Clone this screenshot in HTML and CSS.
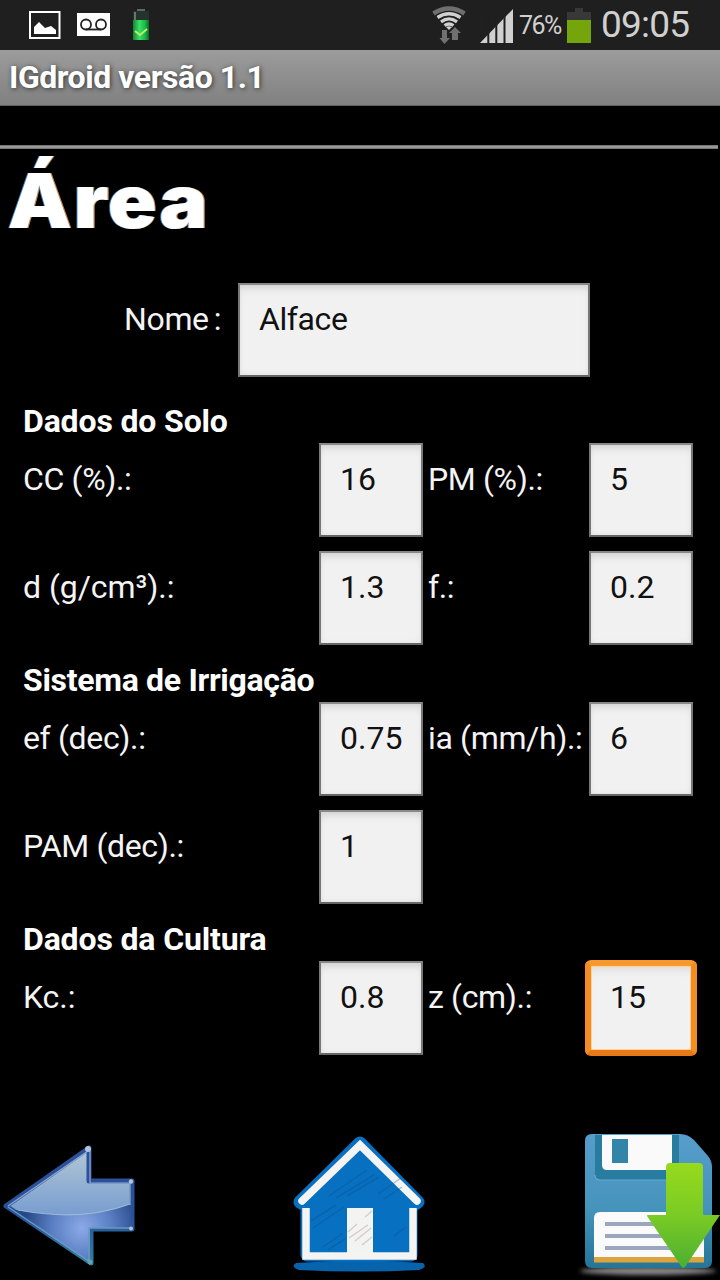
FILE: index.html
```html
<!DOCTYPE html>
<html lang="pt-BR">
<head>
    <meta charset="UTF-8">
    <meta name="viewport" content="width=device-width, initial-scale=1.0">
    <title>IGdroid versão 1.1</title>
    <link rel="stylesheet" href="styles.css">
</head>
<body>
    <!-- Status bar -->
    <div class="statusbar">
        <div class="notifications">
            <svg class="ico-picture" width="32" height="28" viewBox="0 0 32 28">
                <rect x="1" y="1" width="29.5" height="26" fill="none" stroke="#fff" stroke-width="2"/>
                <path d="M5 23V16L10 11L16 17L22 15L27 19V23Z" fill="#fff"/>
            </svg>
            <svg class="ico-voicemail" width="33" height="23" viewBox="0 0 33 23">
                <rect width="33" height="23" fill="#fff"/>
                <g fill="none" stroke="#222" stroke-width="1.8">
                    <circle cx="9" cy="11.5" r="5"/>
                    <circle cx="24" cy="11.5" r="5"/>
                    <path d="M9 16.5H24"/>
                </g>
            </svg>
            <svg class="ico-charge" width="18" height="32" viewBox="0 0 18 32">
                <defs>
                    <linearGradient id="cell" x1="0" x2="1" y1="0" y2="0">
                        <stop offset="0" stop-color="#138535"/>
                        <stop offset=".4" stop-color="#3be065"/>
                        <stop offset=".75" stop-color="#18b948"/>
                        <stop offset="1" stop-color="#0c6728"/>
                    </linearGradient>
                </defs>
                <rect x="5" y="0" width="8" height="3" fill="#5c6964"/>
                <rect x="1" y="2" width="16" height="10" fill="#24342d"/>
                <path d="M3 3V11" stroke="#64766d" stroke-width="2"/>
                <rect x="1" y="11" width="16" height="20" fill="url(#cell)"/>
                <path d="M3 22L8 26L15 20" fill="none" stroke="#b5f16b" stroke-width="2"/>
            </svg>
        </div>
        <div class="system">
            <svg class="ico-wifi" width="34" height="38" viewBox="0 0 34 38">
                <path d="M1.5 7.5Q17 -2.5 32.5 7.5" fill="none" stroke="#6e6e6e" stroke-width="4.5"/>
                <g fill="none" stroke="#d0d0d0" stroke-width="3.3">
                    <path d="M5.5 11.5Q17 4 28.5 11.5"/>
                    <path d="M9 15.8Q17 10 25 15.8"/>
                    <path d="M12.5 19.5Q17 16.5 21.5 19.5"/>
                </g>
                <path d="M14 21Q17 19.5 20 21L17 24Z" fill="#d0d0d0"/>
                <path d="M10 24H15V32H18L12.5 38L7.5 32H10Z" fill="#707070"/>
                <path d="M20 34V27H17L23 21L29 27H26V34Z" fill="#707070"/>
            </svg>
            <svg class="ico-signal" width="33" height="34" viewBox="0 0 33 34">
                <path d="M0 34L33 0V34Z" fill="#d0d0d0"/>
                <path d="M8.3 0V34M16.3 0V34M24.5 0V34" stroke="#1f1f1f" stroke-width="2"/>
            </svg>
            <span class="percent">76%</span>
            <svg class="ico-battery" width="24" height="35" viewBox="0 0 24 35">
                <path d="M0 4H8V0H16V4H24V13H0Z" fill="#383838"/>
                <rect y="12" width="24" height="23" fill="#74a50a"/>
            </svg>
            <span class="clock">09:05</span>
        </div>
    </div>

    <div class="titlebar">IGdroid versão 1.1</div>

    <main class="screen">
        <hr class="rule">
        <h1 class="heading">Área</h1>

        <div class="name-row">
            <span class="label">Nome<span class="colon">:</span></span>
            <div class="field wide">Alface</div>
        </div>

        <h2 class="section">Dados do Solo</h2>
        <div class="fields">
            <span class="label">CC (%).:</span>
            <div class="field">16</div>
            <span class="label">PM (%).:</span>
            <div class="field">5</div>
            <span class="label unit">d (g/cm³).:</span>
            <div class="field">1.3</div>
            <span class="label">f.:</span>
            <div class="field">0.2</div>
        </div>

        <h2 class="section irrigation">Sistema de Irrigação</h2>
        <div class="fields">
            <span class="label">ef (dec).:</span>
            <div class="field">0.75</div>
            <span class="label">ia (mm/h).:</span>
            <div class="field">6</div>
            <span class="label">PAM (dec).:</span>
            <div class="field">1</div>
        </div>

        <h2 class="section">Dados da Cultura</h2>
        <div class="fields">
            <span class="label unit">Kc.:</span>
            <div class="field">0.8</div>
            <span class="label">z (cm).:</span>
            <div class="field focused">15</div>
        </div>
    </main>

    <!-- Bottom buttons -->
    <nav class="actions">
        <svg class="btn-back" width="150" height="150" viewBox="0 0 150 150">
            <defs>
                <linearGradient id="arrowBody" x1="0" x2="0" y1="0" y2="1">
                    <stop offset="0" stop-color="#b4c8d4"/>
                    <stop offset=".55" stop-color="#7b9fd0"/>
                    <stop offset="1" stop-color="#6f9fce"/>
                </linearGradient>
                <radialGradient id="arrowLow" gradientUnits="userSpaceOnUse" cx="82" cy="98" r="58">
                    <stop offset="0" stop-color="#8ba9e6"/>
                    <stop offset=".5" stop-color="#5c80c4"/>
                    <stop offset="1" stop-color="#264889"/>
                </radialGradient>
                <linearGradient id="arrowEdge" x1="0" x2="0" y1="0" y2="1">
                    <stop offset="0" stop-color="#2d509a"/>
                    <stop offset=".6" stop-color="#29519b"/>
                    <stop offset="1" stop-color="#337e9d"/>
                </linearGradient>
                <clipPath id="arrowClip"><path d="M6 76L89 19V52H131V98H90V133Z"/></clipPath>
            </defs>
            <path d="M6 76L89 18V51H132V99H91V133Z" fill="url(#arrowBody)" stroke="url(#arrowEdge)" stroke-width="5" stroke-linejoin="round"/>
            <path d="M0 77Q82 94 132 73V135H0Z" fill="url(#arrowLow)" clip-path="url(#arrowClip)"/>
            <path d="M8 76L88 21M90 20V53H130V75M18 80Q82 92 130 74" fill="none" stroke="#a9c2db" stroke-width="1.2" opacity=".8"/>
            <path d="M8 77L89 131V98H130" fill="none" stroke="#639bc2" stroke-width="1.5"/>
            <g fill="#b3c4dc">
                <circle cx="88" cy="19" r="3"/>
                <circle cx="131" cy="51.5" r="2.2"/>
                <circle cx="131" cy="98.5" r="2"/>
            </g>
            <circle cx="90" cy="132" r="2.5" fill="#61a2b6"/>
        </svg>

        <svg class="btn-home" width="160" height="160" viewBox="0 0 160 160">
            <path d="M16 143Q80 138 143 143Q148 147 139 150Q80 153 19 150Q10 147 16 143Z" fill="#0863ad"/>
            <path d="M20 82L80 23L138 82L131 87V135H27V86Z" fill="#0870c0" stroke="#0870c0" stroke-width="13" stroke-linejoin="round"/>
            <path d="M26 88V136H133V88" fill="none" stroke="#f4f4f2" stroke-width="7.5"/>
            <path d="M22 81L80 25L137 81" fill="none" stroke="#f4f4f2" stroke-width="7.5" stroke-linecap="round"/>
            <g stroke="#064b83" stroke-width="1.5" opacity=".3">
                <path d="M49 76L87 50M56 78L94 55M67 76L99 57M31 101L56 85M33 108L64 87M43 127L63 113M48 130L65 119M98 74L121 58M104 79L122 67M114 116L126 107"/>
            </g>
            <rect x="67" y="88" width="26" height="45" fill="#f3f3f1"/>
            <path d="M68 112L77 104M69 118L88 105M75 121L91 108M82 125L92 117M85 97L92 91" stroke="#d2cecb" stroke-width="1.5"/>
        </svg>

        <svg class="btn-save" width="150" height="160" viewBox="0 0 150 160">
            <defs>
                <linearGradient id="disk" x1="0" x2="0" y1="0" y2="1">
                    <stop offset="0" stop-color="#579dcb"/>
                    <stop offset=".55" stop-color="#4594bc"/>
                    <stop offset="1" stop-color="#247597"/>
                </linearGradient>
                <linearGradient id="down" x1="0" x2="0" y1="0" y2="1">
                    <stop offset="0" stop-color="#96da1d"/>
                    <stop offset=".5" stop-color="#7acb24"/>
                    <stop offset="1" stop-color="#4cae32"/>
                </linearGradient>
                <filter id="soft" x="-10%" y="-100%" width="120%" height="300%"><feGaussianBlur stdDeviation="2"/></filter>
            </defs>
            <ellipse cx="78" cy="151" rx="68" ry="4" fill="#858585" filter="url(#soft)"/>
            <path d="M22 14H110Q118 14 124 20L138 36Q142 41 142 47V141Q142 148 135 148H22Q15 148 15 141V21Q15 14 22 14Z" fill="url(#disk)"/>
            <path d="M25 15H109V60H30Q25 60 25 55Z" fill="#287c9f"/>
            <path d="M25 55Q25 60 30 60H109" fill="none" stroke="#61abc9" stroke-width="1.2"/>
            <path d="M32 15H102V50H37Q32 50 32 45Z" fill="#fafafa"/>
            <rect x="42" y="19" width="16" height="24" fill="#3285a8"/>
            <path d="M24 137V98Q24 92 30 92H128Q134 92 134 98V137Z" fill="#fafafa"/>
            <rect x="24" y="137" width="110" height="5.5" fill="#dda43e"/>
            <path d="M35 104H110M35 116H110M35 128H110" stroke="#9aa6bd" stroke-width="4"/>
            <path d="M100 43H129Q133 43 133 47V95H150L115 147Q113 149 111 146L77 96Q77 95 78 95H96V47Q96 43 100 43Z" fill="url(#down)"/>
        </svg>
    </nav>
</body>
</html>
```
FILE: styles.css
```css
* { box-sizing: border-box; }

body {
    margin: 0;
    width: 720px;
    height: 1280px;
    display: flex;
    flex-direction: column;
    overflow: hidden;
    background: #000;
    color: #f4f4f4;
    font-family: Roboto, sans-serif;
    font-size: 32px;
    line-height: 38px;
}
svg { display: block; flex: none; }

/* Status bar */
.statusbar {
    height: 50px;
    flex: none;
    display: flex;
    justify-content: space-between;
    padding: 0 30px 0 29px;
    background: #1f1f1f;
    color: #d0d0d0;
}
.notifications, .system {
    display: flex;
    align-items: flex-start;
}
.ico-picture { margin-top: 11px; }
.ico-voicemail { margin: 13px 0 0 16px; }
.ico-charge { margin: 9px 0 0 22px; }
.ico-wifi { margin: 6px 14px 0 0; }
.ico-signal { margin-top: 9px; }
.ico-battery { margin-top: 8px; }
.percent {
    width: 54px;
    padding: 7px 0 0 6px;
    font-size: 25px;
    letter-spacing: -1.5px;
}
.clock {
    width: 89px;
    padding-top: 6px;
    font-size: 37px;
    letter-spacing: -0.8px;
    margin-left: 10px;
}

.titlebar {
    height: 56px;
    flex: none;
    padding: 8px 9px;
    background: linear-gradient(#9c9c9c, #808080);
    border-bottom: 1px solid #606060;
    color: #fff;
    font-weight: 700;
    letter-spacing: -0.45px;
    text-shadow: 1px 1px 5px #333;
}

/* Form */
.screen {
    height: 1014px;
    flex: none;
    padding-top: 39px;
}
.rule {
    width: 718px;
    height: 4px;
    margin: 0;
    border: 0;
    background: linear-gradient(#666, #aaa, #666);
}
.heading {
    width: 300px;
    height: 134px;
    margin: 0;
    padding: 0 0 0 7px;
    font: 900 75px/104px Inter, Arial, sans-serif;
    letter-spacing: 1.5px;
    color: #fff;
    text-shadow: -1px 0 #3d83c4, 1px 0 #c08a52;
    transform: scaleX(1.08);
    transform-origin: 0 0;
}
.name-row {
    display: flex;
    height: 117px;
    padding-left: 124px;
}
.name-row .label { width: 114px; }
.colon { margin-left: 5px; }
.section {
    height: 43px;
    margin: 0;
    padding: 2px 0 0 23px;
    color: #fff;
    font-size: 32px;
    line-height: 38px;
    font-weight: 700;
    letter-spacing: -0.15px;
}
.section.irrigation { letter-spacing: -0.3px; }
.fields {
    display: grid;
    grid-template-columns: 296px 109px 161px 104px;
    grid-auto-rows: 108px;
    padding-left: 23px;
}
.label {
    padding-top: 17px;
    letter-spacing: -0.35px;
    white-space: nowrap;
}
.label.unit { letter-spacing: -0.05px; }
.field {
    width: 104px;
    height: 94px;
    padding: 15px 0 0 19px;
    border: 2px solid #777;
    border-color: #888 #777 #666;
    background: #f1f1f1;
    color: #111;
    box-shadow: inset 0 9px 9px -6px #d2d2d2, inset 0 0 5px #ddd;
    white-space: nowrap;
}
.field.wide {
    width: 352px;
    letter-spacing: -0.4px;
}
.field.focused {
    width: 112px;
    height: 96px;
    margin: -1px 0 0 -4px;
    padding: 12px 0 0 19px;
    border: 6px solid #f28b22;
    border-color: #f8982d #f48c23 #e97817;
    border-radius: 6px;
    box-shadow: inset 0 0 0 1px #ffd49a, inset 0 9px 9px -6px #d8d8d8;
}

/* Bottom buttons */
.actions {
    height: 160px;
    display: flex;
    justify-content: space-between;
    align-items: flex-end;
}
```
